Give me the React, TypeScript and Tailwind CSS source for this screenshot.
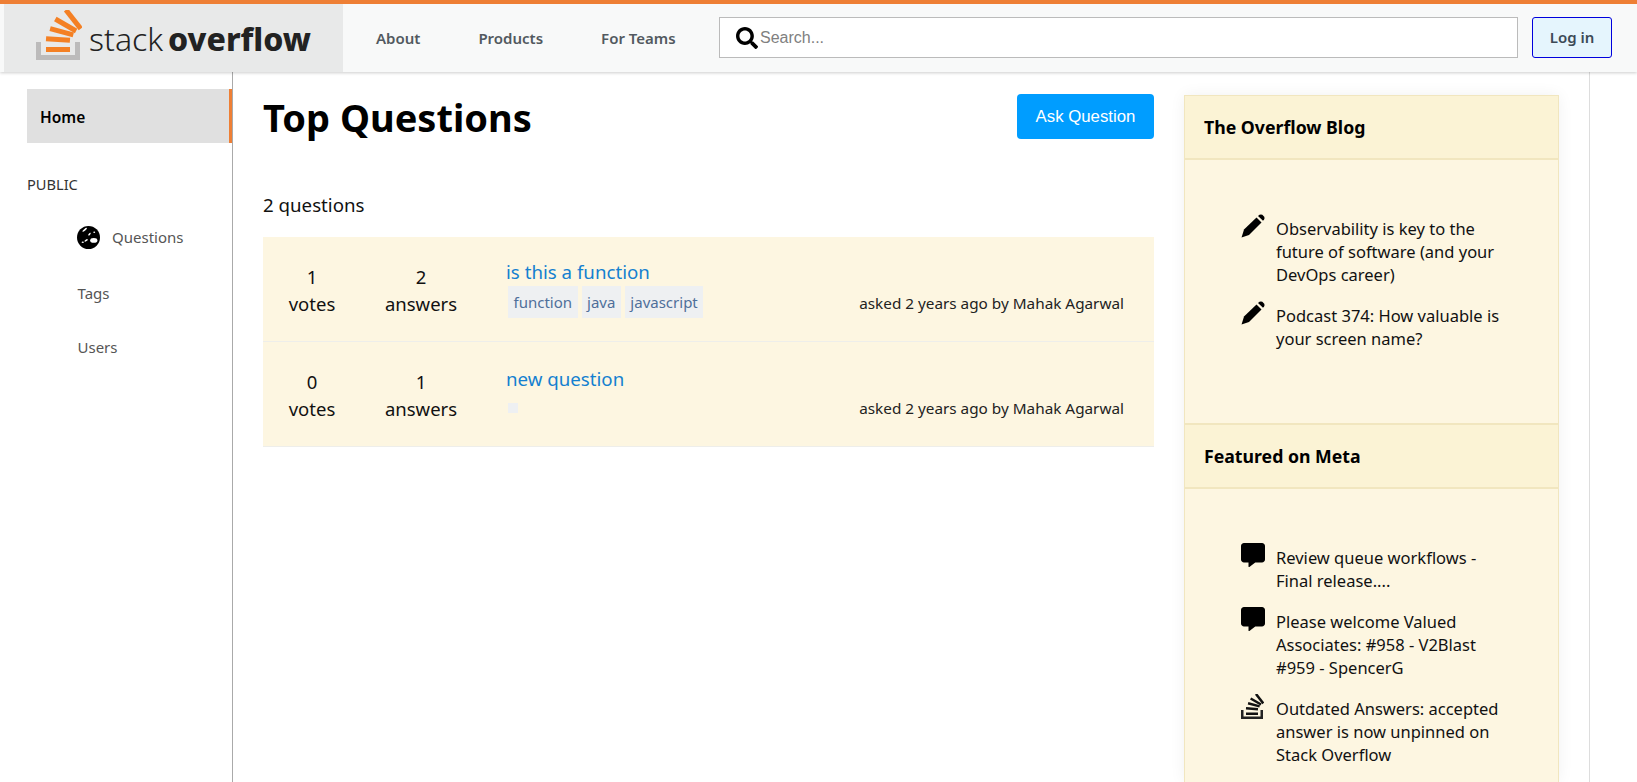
import React from "react";
import { FaSearch, FaCommentAlt } from "react-icons/fa";

const Bars = ({ bar, tray }: { bar: string; tray: string }) => (
  <>
    <path d="M0 32h5v13h34V32h5v18H0z" fill={tray} />
    <g fill={bar}>
      <rect x="10" y="37" width="24" height="5" />
      <rect x="10" y="27" width="24" height="5" transform="rotate(4 22 29.500)" />
      <rect x="13.700" y="19.200" width="24" height="5" transform="rotate(15 25.700 21.700)" />
      <rect x="17.700" y="12.500" width="24" height="5" transform="rotate(30 29.700 15)" />
      <rect x="25.300" y="6.800" width="24" height="5" transform="rotate(52 37.300 9.300)" />
    </g>
  </>
);

const Logo = () => (
  <svg width="46" height="50" viewBox="0 0 46 50" className="mb-[6px] shrink-0">
    <Bars bar="#f48024" tray="#bcbbbb" />
  </svg>
);

const SoIcon = () => (
  <svg width="23" height="25" viewBox="0 0 46 50">
    <Bars bar="#111" tray="#222" />
  </svg>
);

const Pencil = () => (
  <svg width="24" height="24" viewBox="0 0 24 24" fill="#000">
    <path d="M0.500 23.500L3 15.500L15.500 3.500L20.500 8.500L8 21Z" />
    <path d="M17 2L18.500 0.800Q20 0 21.300 0.800L23.200 2.800Q24 4 23.200 5.300L22 6.800Z" />
  </svg>
);

const Globe = () => (
  <svg width="23" height="23" viewBox="0 0 24 24" className="shrink-0">
    <circle cx="12" cy="12" r="12" fill="#000" />
    <g fill="#fff">
      <ellipse cx="17.500" cy="15" rx="3.800" ry="2.600" />
      <ellipse cx="9.500" cy="15" rx="2" ry="0.900" transform="rotate(-30 9.500 15)" />
      <ellipse cx="6" cy="17" rx="1.200" ry="0.700" />
      <ellipse cx="13" cy="8.500" rx="1.800" ry="0.800" transform="rotate(-50 13 8.500)" />
      <ellipse cx="8" cy="4" rx="3" ry="0.900" transform="rotate(-40 8 4)" />
      <ellipse cx="18" cy="6.500" rx="1" ry="0.700" />
    </g>
  </svg>
);

const Tag = ({ t }: { t: string }) => (
  <span className="h-[32px] bg-[#eef0f2] px-[5.5px] text-[15px] leading-[32px] text-[#4f6f9a]">{t}</span>
);

const Row = ({ v, a, title, tags }: { v: number; a: number; title: string; tags: string[] }) => (
  <div className="flex h-[105px] border-b border-[#eeeeea] bg-[#fdf6e1]">
    <div className="flex w-[98px] shrink-0 flex-col items-center justify-center pt-[1px] text-[18.500px] leading-[27px] text-[#111]">
      <span>{v}</span>
      <span>votes</span>
    </div>
    <div className="flex w-[120px] shrink-0 flex-col items-center justify-center pt-[1px] text-[18.500px] leading-[27px] text-[#111]">
      <span>{a}</span>
      <span>answers</span>
    </div>
    <div className="ml-[25px] flex flex-1 flex-col justify-center pb-[3px]">
      <a className="text-[18.700px] leading-[27px] text-[#1480d0]">{title}</a>
      <div className="mt-[1px] flex items-center justify-between pr-[30px]">
        <div className="ml-[2px] flex items-center gap-[4px]">
          {tags.length ? tags.map((t) => <Tag key={t} t={t} />) : <span className="mt-[10px] mb-[8px] h-[10px] w-[10px] bg-[#eef0f2]" />}
        </div>
        <span className="pt-[4px] text-[15.300px] text-[#222]">asked 2 years ago by Mahak Agarwal</span>
      </div>
    </div>
  </div>
);

const Item = ({ icon, children }: { icon: React.ReactNode; children: React.ReactNode }) => (
  <li className="flex">
    <span className="w-[35px] shrink-0 pt-[1px] text-[24px] leading-none text-black">{icon}</span>
    <span className="w-[230px] pt-[4px] text-[16.500px] leading-[23px] text-[#111]">{children}</span>
  </li>
);

const PanelHead = ({ children }: { children: React.ReactNode }) => (
  <div className="flex h-[64px] items-center border-b-2 border-[#f1e6bf] bg-[#fbf3d5] pt-[1px] pl-[19px] text-[17.700px] font-bold text-black">{children}</div>
);

export default function App() {
  return (
    <div className="h-[782px] overflow-hidden bg-white font-['Noto_Sans',sans-serif]">
      <header className="relative z-10 flex h-[72px] border-t-4 border-[#ee7f35] bg-[#f8f9f9] shadow-[0_1px_3px_rgba(0,0,0,0.2)]">
        <div className="ml-[4px] flex h-[68px] w-[339px] items-center bg-[#e8e9e9] pl-[32px]">
          <Logo />
          <span className="ml-[7px] mt-[2px] text-[32px] leading-none font-light text-[#222]">
            stack<span className="ml-[5px] font-extrabold">overflow</span>
          </span>
        </div>
        <nav className="ml-[33px] flex w-[343px] items-center gap-[58px] text-[15px] font-semibold text-[#525960]">
          <span>About</span>
          <span>Products</span>
          <span>For Teams</span>
        </nav>
        <div className="mt-[13px] flex h-[41px] w-[799px] items-center border border-[#bbbbbb] bg-white pl-[16px] font-['Liberation_Sans',sans-serif]">
          <FaSearch className="text-[22px] text-black" />
          <span className="ml-[2px] text-[16px] text-[#808080]">Search...</span>
        </div>
        <button className="ml-[14px] mt-[13px] h-[41px] w-[80px] rounded-[3px] border border-[#0000dd] bg-[#e5f5fd] text-[15px] font-semibold text-[#3c4a57]">Log in</button>
      </header>
      <div className="flex h-[710px] w-[1590px] border-r border-[#dddddd]">
        <aside className="w-[233px] shrink-0 border-r border-[#aaaaaa] pt-[17px]">
          <div className="ml-[27px] flex h-[54px] items-center border-r-[3px] border-[#ee7f35] bg-[#e0e0e0] pt-[4px] pl-[13px] text-[15.500px] font-semibold text-black">Home</div>
          <div className="ml-[27px] mt-[31px] text-[14.600px] leading-[20px] text-[#333]">PUBLIC</div>
          <div className="mt-[31px] ml-[77px] flex h-[24px] items-center gap-[12px] text-[15px] text-[#555]">
            <Globe />
            Questions
          </div>
          <div className="ml-[77.500px] mt-[34px] text-[15px] leading-[20px] text-[#555]">Tags</div>
          <div className="ml-[77.500px] mt-[34px] text-[15px] leading-[20px] text-[#555]">Users</div>
        </aside>
        <main className="ml-[30px] w-[891px] shrink-0">
          <div className="flex items-start justify-between pt-[22px]">
            <h1 className="-mt-[2px] mb-[2px] text-[38px] leading-[50px] font-bold text-black">Top Questions</h1>
            <button className="h-[45px] w-[137px] rounded-[4px] bg-[#009dff] font-['Liberation_Sans',sans-serif] text-[16.800px] text-white">Ask Question</button>
          </div>
          <p className="mt-[47px] text-[18.700px] leading-[27px] text-[#111]">2 questions</p>
          <div className="mt-[19px]">
            <Row v={1} a={2} title="is this a function" tags={["function", "java", "javascript"]} />
            <Row v={0} a={1} title="new question" tags={[]} />
          </div>
        </main>
        <aside className="ml-[30px] mt-[23px] w-[375px] shrink-0 border-x border-t border-[#f1e6bf] bg-[#fdf6e1] shadow-[0_0_15px_rgba(0,0,0,0.06)]">
          <PanelHead>The Overflow Blog</PanelHead>
          <ul className="flex h-[265px] flex-col gap-[14px] border-b-2 border-[#f1e6bf] pt-[53px] pl-[56px]">
            <Item icon={<Pencil />}>Observability is key to the future of software (and your DevOps career)</Item>
            <Item icon={<Pencil />}>Podcast 374: How valuable is your screen name?</Item>
          </ul>
          <PanelHead>Featured on Meta</PanelHead>
          <ul className="flex flex-col gap-[14px] pt-[53px] pl-[56px]">
            <Item icon={<FaCommentAlt />}>Review queue workflows - Final release....</Item>
            <Item icon={<FaCommentAlt />}>Please welcome Valued Associates: #958 - V2Blast #959 - SpencerG</Item>
            <Item icon={<SoIcon />}>Outdated Answers: accepted answer is now unpinned on Stack Overflow</Item>
          </ul>
        </aside>
      </div>
    </div>
  );
}
